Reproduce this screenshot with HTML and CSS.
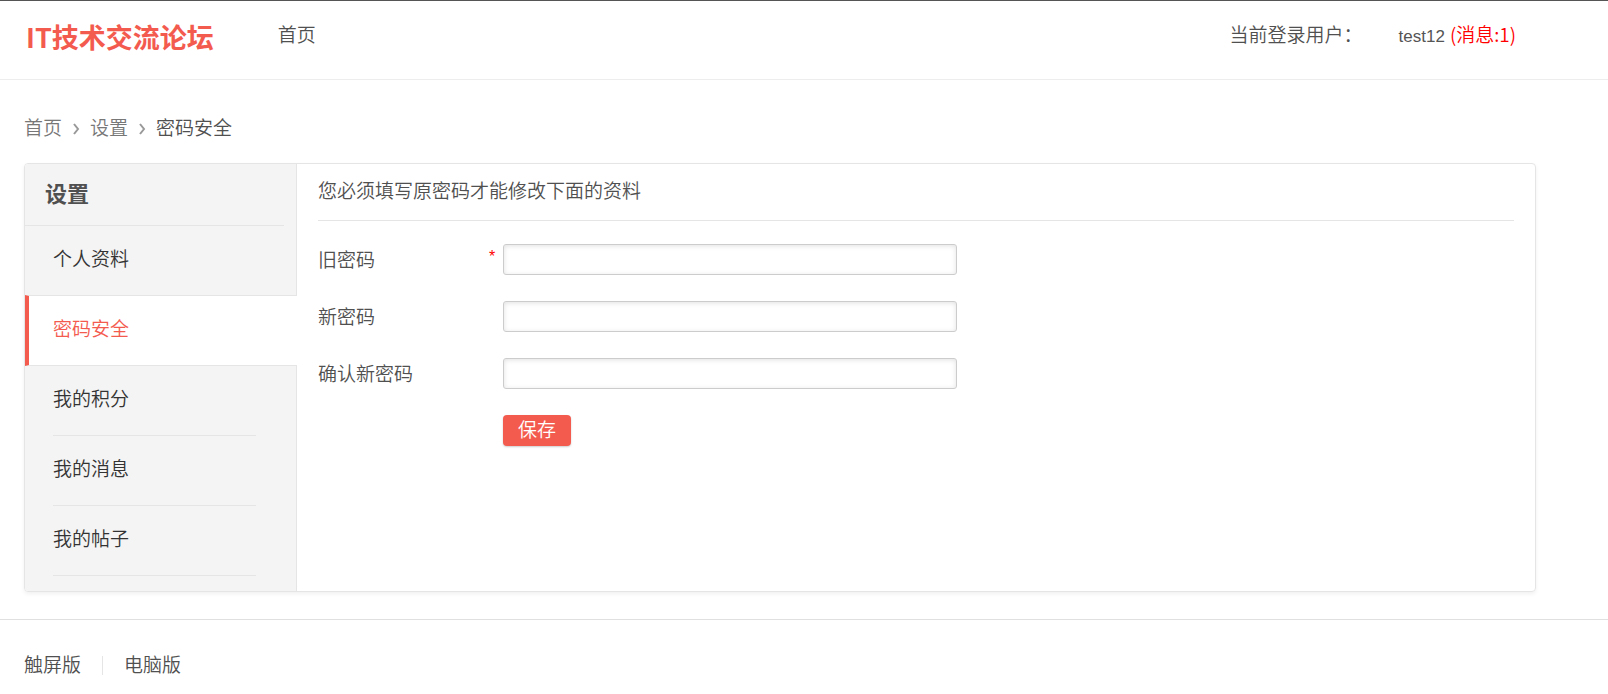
FILE: index.html
```html
<!DOCTYPE html>
<html lang="zh-CN">
<head>
    <meta charset="UTF-8">
    <meta name="viewport" content="width=device-width, initial-scale=1.0">
    <title>密码安全 - IT技术交流论坛</title>
    <link rel="stylesheet" href="styles.css">
</head>
<body>
    <header class="header">
        <a href="#" class="logo">IT技术交流论坛</a>
        <nav class="nav">
            <a href="#">首页</a>
        </nav>
        <div class="user">
            <span class="user-label">当前登录用户：</span>
            <a href="#" class="user-name">test12</a>
            <a href="#" class="user-msg">(消息:1)</a>
        </div>
    </header>

    <main class="main">
        <nav class="breadcrumb">
            <a href="#">首页</a>
            <svg class="arrow" viewBox="0 0 8 12"><path d="M2 1l4 5L2 11"/></svg>
            <a href="#">设置</a>
            <svg class="arrow" viewBox="0 0 8 12"><path d="M2 1l4 5L2 11"/></svg>
            <span>密码安全</span>
        </nav>

        <div class="card">
            <aside class="side">
                <h2>设置</h2>
                <ul class="menu">
                    <li><a href="#">个人资料</a></li>
                    <li class="active"><a href="#">密码安全</a></li>
                    <li><a href="#">我的积分</a></li>
                    <li><a href="#">我的消息</a></li>
                    <li><a href="#">我的帖子</a></li>
                </ul>
            </aside>

            <section class="content">
                <p class="tip">您必须填写原密码才能修改下面的资料</p>
                <form class="form">
                    <div class="row">
                        <label for="oldPwd">旧密码</label>
                        <span class="required">*</span>
                        <input type="password" id="oldPwd" required>
                    </div>
                    <div class="row">
                        <label for="newPwd">新密码</label>
                        <input type="password" id="newPwd">
                    </div>
                    <div class="row">
                        <label for="confirmPwd">确认新密码</label>
                        <input type="password" id="confirmPwd">
                    </div>
                    <div class="row">
                        <button type="submit" class="save-btn">保存</button>
                    </div>
                </form>
            </section>
        </div>
    </main>

    <footer class="footer">
        <a href="#">触屏版</a>
        <a href="#">电脑版</a>
    </footer>
</body>
</html>
```

FILE: styles.css
```css
:root {
    --primary-color: #f45b4f;
    --text-color: #505050;
    --border-color: #e5e5e5;
    --side-bg: #f4f4f4;
}

* {
    margin: 0;
    padding: 0;
    box-sizing: border-box;
}

body {
    font-family: "Noto Sans CJK SC", sans-serif;
    font-size: 19px;
    font-weight: 350;
    line-height: 28px;
    color: var(--text-color);
    background-color: #ffffff;
    border-top: 1px solid #555555;
}

a {
    color: inherit;
    text-decoration: none;
}

/* header */
.header {
    display: flex;
    align-items: flex-start;
    height: 79px;
    padding: 19px 92px 0 26px;
    border-bottom: 1px solid #ededed;
}

.logo {
    font-size: 27px;
    font-weight: 700;
    line-height: 34px;
    color: var(--primary-color);
}

.nav {
    margin-left: 64px;
}

.user {
    display: flex;
    align-items: baseline;
    margin-left: auto;
}

.user-label {
    margin-right: 36px;
}

.user-name {
    margin-right: 5px;
    font-family: "Liberation Sans", Arial, sans-serif;
    font-size: 17px;
    font-weight: 400;
    color: #555555;
}

.user-msg {
    color: #ff0000;
}

/* main */
.main {
    padding: 33px 72px 27px 24px;
}

.breadcrumb {
    display: flex;
    align-items: center;
    gap: 10px;
    margin-bottom: 22px;
}

.breadcrumb a {
    color: #777777;
}

.arrow {
    width: 8px;
    height: 12px;
    margin-top: 4px;
    fill: none;
    stroke: #999999;
    stroke-width: 2;
}

.card {
    display: flex;
    border: 1px solid var(--border-color);
    border-radius: 4px;
    box-shadow: 0 2px 4px rgba(0, 0, 0, 0.06);
}

.side {
    flex: 0 0 272px;
    padding-bottom: 15px;
    background-color: var(--side-bg);
    border-right: 1px solid var(--border-color);
    border-radius: 3px 0 0 3px;
}

.side h2 {
    margin-right: 12px;
    padding: 14px 20px 19px;
    font-size: 22px;
    border-bottom: 1px solid var(--border-color);
}

.menu {
    list-style: none;
}

.menu a {
    display: block;
    height: 70px;
    margin: 0 40px 0 28px;
    line-height: 64px;
    color: #333333;
    border-bottom: 1px solid var(--border-color);
}

/* covers the line above and the right border of the side column */
.menu .active {
    margin: -1px -1px 0 0;
    background-color: #ffffff;
    border: 1px solid var(--border-color);
    border-width: 1px 0;
    border-left: 4px solid var(--primary-color);
}

.menu .active a {
    height: 69px;
    margin-left: 24px;
    color: var(--primary-color);
    border-bottom: 0;
}

.menu li:first-child a {
    border-bottom-color: transparent;
}

.content {
    flex: 1;
    padding: 12px 21px 0;
}

.tip {
    padding-bottom: 16px;
    border-bottom: 1px solid var(--border-color);
}

.form {
    padding-top: 23px;
}

.row {
    display: flex;
    align-items: flex-start;
    height: 31px;
    margin-bottom: 26px;
}

.row label {
    width: 171px;
    line-height: 30px;
}

.row input {
    width: 454px;
    height: 31px;
    margin-left: 14px;
    padding: 0 8px;
    font-size: 16px;
    background-color: #ffffff;
    border: 1px solid #cccccc;
    border-radius: 3px;
    box-shadow: inset 0 1px 5px rgba(0, 0, 0, 0.12);
}

.row .required + input {
    margin-left: 6px;
}

.required {
    width: 8px;
    font-family: "Liberation Sans", Arial, sans-serif;
    font-size: 16px;
    font-weight: 400;
    line-height: 26px;
    color: #ff0000;
}

.save-btn {
    height: 31px;
    margin-left: 185px;
    padding: 0 15px 4px;
    font-family: inherit;
    font-size: 19px;
    font-weight: inherit;
    line-height: 27px;
    color: #ffffff;
    background-color: var(--primary-color);
    border: none;
    border-radius: 4px;
    box-shadow: 0 1px 2px rgba(0, 0, 0, 0.2);
    cursor: pointer;
}

/* footer */
.footer {
    display: flex;
    padding: 30px 24px;
    border-top: 1px solid #e0e0e0;
}

.footer a + a {
    position: relative;
    margin-left: 21px;
    padding-left: 22px;
}

.footer a + a::before {
    content: "";
    position: absolute;
    top: 6px;
    left: 0;
    height: 19px;
    border-left: 1px solid var(--border-color);
}
```
